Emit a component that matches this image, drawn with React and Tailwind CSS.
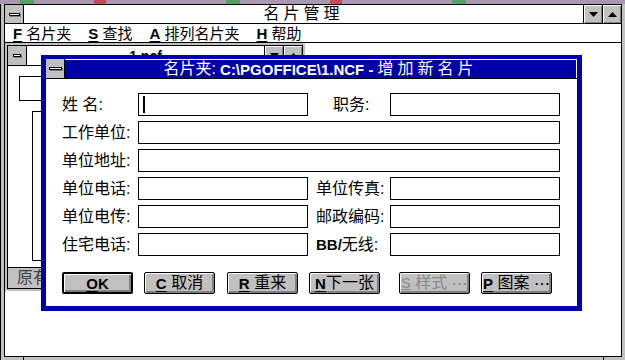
import React from "react";

const FONT = "font-['Liberation_Sans','Noto_Sans_CJK_SC',sans-serif]";

const Bar = ({ w }) => (
  <div className={`${w} h-[3px] border border-black bg-white shadow-[1px_1px_0_#808080]`} />
);

const Arrow = ({ up }) => (
  <svg width="9" height="5" viewBox="0 0 9 5">
    {up ? <polygon points="0,5 9,5 4.5,0" fill="#000" /> : <polygon points="0,0 9,0 4.5,5" fill="#000" />}
  </svg>
);

const TitleBtn = ({ up }) => (
  <div className="flex w-[19px] items-center justify-center border-l border-black bg-[#c0c0c0] shadow-[inset_1px_1px_0_#fff,inset_-1px_-1px_0_#808080]">
    <Arrow up={up} />
  </div>
);

const Key = ({ children }) => (
  <span className="font-bold underline underline-offset-2 text-[15px]">{children}</span>
);

const Btn = ({ children, def, disabled, className = "" }) => (
  <button
    type="button"
    className={`flex h-[22px] w-[71px] items-center justify-center rounded-[2px] border-black bg-[#c0c0c0] text-[16px] leading-none shadow-[inset_1px_1px_0_#fff,inset_-2px_-2px_0_#808080] ${
      def ? "border-2" : "border"
    } ${disabled ? "text-[#8a8a8a]" : "text-black"} ${className}`}
  >
    {children}
  </button>
);

const Input = ({ wide, cursor }) => (
  <div className={`${wide ? "w-[422px]" : "w-[170px]"} flex h-[23px] items-center border border-black bg-white pl-[4px]`}>
    {cursor && <div className="h-[17px] w-[2px] bg-black" />}
  </div>
);

const Row = ({ children }) => <div className="flex h-[23px] items-center">{children}</div>;

const Label = ({ children }) => <div className="w-[76px] text-[16px] leading-none">{children}</div>;

const RLabel = ({ children, pad = "pl-[8px]" }) => (
  <div className={`w-[82px] ${pad} text-[16px] leading-none`}>{children}</div>
);

export default function App() {
  return (
    <div className={`relative h-[360px] w-[625px] overflow-hidden bg-white text-black ${FONT}`}>
      {/* desktop showing above the window */}
      <div className="flex h-[4px]">
        <div className="w-[20px] bg-[#a898b0]" />
        <div className="w-[14px] bg-[#58a060]" />
        <div className="w-[60px] bg-[#a898b0]" />
        <div className="w-[12px] bg-[#c84858]" />
        <div className="w-[120px] bg-[#a898b0]" />
        <div className="w-[14px] bg-[#58a060]" />
        <div className="w-[90px] bg-[#a898b0]" />
        <div className="w-[12px] bg-[#c84858]" />
        <div className="w-[110px] bg-[#a898b0]" />
        <div className="w-[14px] bg-[#58a060]" />
        <div className="flex-1 bg-[#a898b0]" />
      </div>

      {/* main window */}
      <div className="flex h-[356px] flex-col border-l border-black bg-[#c0c0c0] pb-[3px] pl-[3px] pr-[3px]">
        <div className="flex min-h-0 flex-1 flex-col border border-black bg-white">
          <div className="flex h-[19px] border-b border-black">
            <div className="flex w-[19px] items-center justify-center border-r border-black bg-[#c0c0c0]">
              <Bar w="w-[11px]" />
            </div>
            <div className="flex flex-1 items-center justify-center text-[16px] leading-none tracking-[4px]">名片管理</div>
            <TitleBtn />
            <TitleBtn up />
          </div>
          <div className="flex h-[19px] items-center gap-[17px] border-b border-black pl-[8px] text-[15px] leading-none">
            <span>
              <Key>F</Key> 名片夹
            </span>
            <span>
              <Key>S</Key> 查找
            </span>
            <span>
              <Key>A</Key> 排列名片夹
            </span>
            <span>
              <Key>H</Key> 帮助
            </span>
          </div>

          {/* MDI client */}
          <div className="relative flex-1 overflow-hidden bg-white">
            <div className="absolute left-0 top-0 h-[248px] w-[300px] bg-[#c0c0c0] p-[2px]">
              <div className="flex h-full flex-col border border-black bg-white">
                <div className="flex h-[20px] border-b border-black">
                  <div className="flex w-[19px] items-center justify-center border-r border-black bg-[#c0c0c0]">
                    <Bar w="w-[8px]" />
                  </div>
                  <div className="flex flex-1 items-center justify-center text-[14px] font-bold leading-none">1.ncf</div>
                  <TitleBtn />
                  <TitleBtn up />
                </div>
                <div className="flex flex-1 flex-col pl-[11px] pt-[10px]">
                  <div className="h-[25px] w-[60px] border border-black" />
                  <div className="ml-[13px] mt-[10px] h-[150px] w-[240px] border border-black" />
                </div>
                <div className="flex h-[21px] items-center border-t border-black bg-[#c0c0c0] pl-[9px] text-[16px] leading-none text-[#404040]">
                  原有名片
                </div>
              </div>
            </div>
          </div>
        </div>
      </div>
      <div className="absolute bottom-0 left-[23px] h-[4px] w-px bg-black" />
      <div className="absolute bottom-0 left-[603px] h-[4px] w-px bg-black" />

      {/* dialog */}
      <div className="absolute left-[41px] top-[55px] z-10 flex h-[256px] w-[541px] flex-col border-[5px] border-t-[4px] border-[#0000a8] bg-white">
        <div className="flex h-[20px] border-b border-black">
          <div className="flex w-[19px] items-center justify-center border-r border-black bg-[#c0c0c0]">
            <Bar w="w-[13px]" />
          </div>
          <div className="flex flex-1 items-center justify-center border-r border-t border-white bg-[#0000a8] text-[16px] leading-none text-white">
            名片夹: <span className="ml-[4px] font-bold text-[15px]">{"C:\\PGOFFICE\\1.NCF - "}</span>
            <span className="ml-[4px] tracking-[4px]">增加新名片</span>
          </div>
        </div>

        <div className="flex flex-col gap-[5px] pl-[16px] pt-[14px]">
          <Row>
            <Label>姓 名:</Label>
            <Input cursor />
            <RLabel pad="pl-[25px]">职务:</RLabel>
            <Input />
          </Row>
          <Row>
            <Label>工作单位:</Label>
            <Input wide />
          </Row>
          <Row>
            <Label>单位地址:</Label>
            <Input wide />
          </Row>
          <Row>
            <Label>单位电话:</Label>
            <Input />
            <RLabel>单位传真:</RLabel>
            <Input />
          </Row>
          <Row>
            <Label>单位电传:</Label>
            <Input />
            <RLabel>邮政编码:</RLabel>
            <Input />
          </Row>
          <Row>
            <Label>住宅电话:</Label>
            <Input />
            <RLabel>
              <span className="font-bold text-[15px]">BB/</span>无线:
            </RLabel>
            <Input />
          </Row>

          <div className="mt-[11px] flex">
            <Btn def>
              <Key>O</Key>
              <span className="font-bold text-[15px]">K</span>
            </Btn>
            <Btn className="ml-[11px]">
              <Key>C</Key>&nbsp;取消
            </Btn>
            <Btn className="ml-[12px]">
              <Key>R</Key>&nbsp;重来
            </Btn>
            <Btn className="ml-[11px]">
              <Key>N</Key>下一张
            </Btn>
            <Btn disabled className="ml-[19px]">
              <span className="underline text-[14px]">S</span>&nbsp;样式&nbsp;<span className="font-['Noto_Sans_CJK_SC']">…</span>
            </Btn>
            <Btn className="ml-[11px]">
              <Key>P</Key>&nbsp;图案&nbsp;<span className="font-['Noto_Sans_CJK_SC']">…</span>
            </Btn>
          </div>
        </div>
      </div>
    </div>
  );
}
